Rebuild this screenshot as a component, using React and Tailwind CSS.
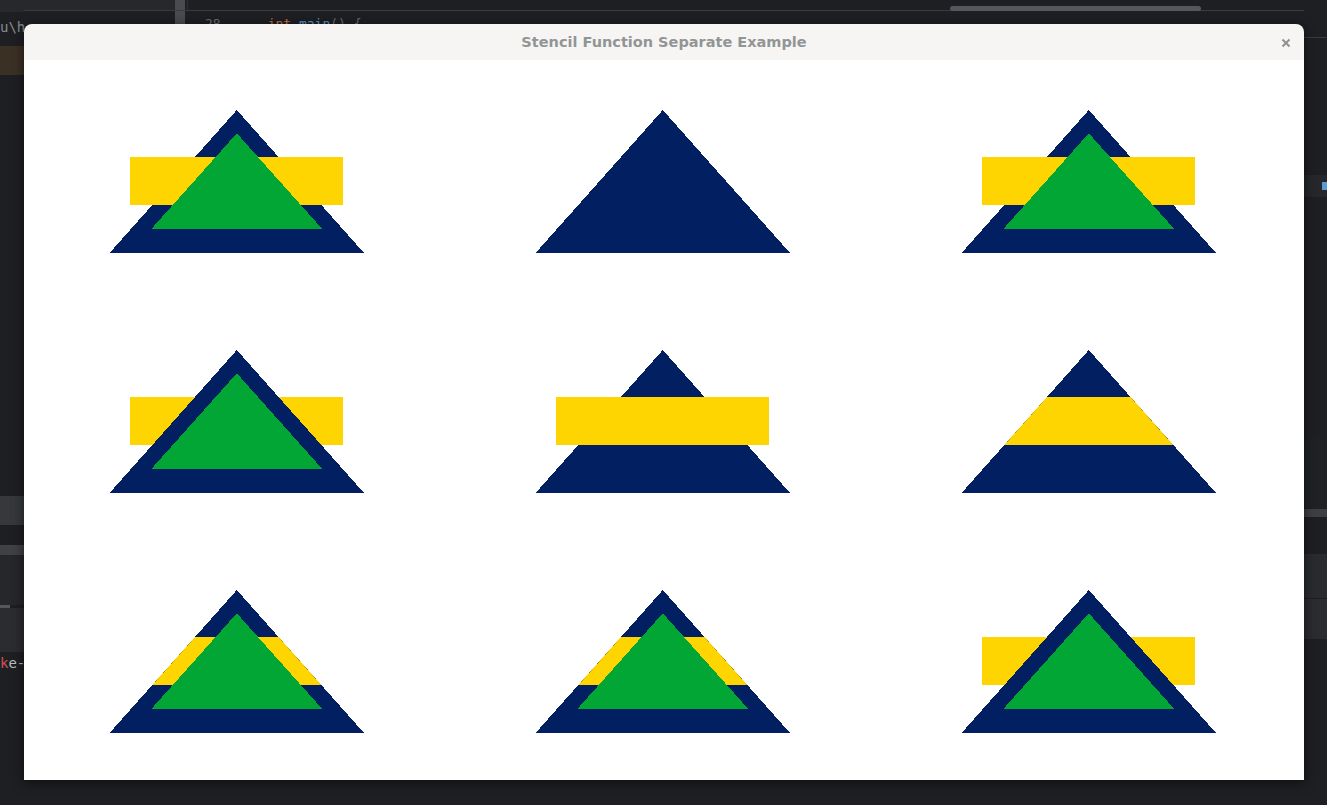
import { useId } from 'react';

const NAVY = '#022061';
const YELLOW = '#fed500';
const GREEN = '#01a634';

// shapes in px of one 426 x 240 cell
const OUTER = '212.8,50 340,193 85.6,193';
const INNER = '212.8,73.3 298,168.7 127.6,168.7';
const RECT = { x: 105.8, y: 96.7, width: 212.8, height: 48 };

// which layers show in each cell, in draw order
const cells = [
  ['navy', 'rect', 'green'],
  ['navy'],
  ['navy', 'rect', 'green'],
  ['rect', 'navy', 'green'],
  ['navy', 'rect'],
  ['navy', 'clip'],
  ['navy', 'clip', 'green'],
  ['navy', 'clip', 'green'],
  ['rect', 'navy', 'green'],
];

const mono = { fontFamily: '"DejaVu Sans Mono", monospace' };

const Cell = ({ layers }) => {
  const id = useId().replace(/:/g, '');
  return (
    <svg viewBox="0 0 426 240" width="426" height="240" className="block" shapeRendering="crispEdges">
      <defs>
        <clipPath id={`c${id}`}>
          <polygon points={OUTER} />
        </clipPath>
      </defs>
      {layers.map((l, i) => {
        if (l === 'navy') return <polygon key={i} points={OUTER} fill={NAVY} />;
        if (l === 'green') return <polygon key={i} points={INNER} fill={GREEN} />;
        if (l === 'rect') return <rect key={i} {...RECT} fill={YELLOW} />;
        return <rect key={i} {...RECT} fill={YELLOW} clipPath={`url(#c${id})`} />;
      })}
    </svg>
  );
};

// the editor behind the window
const Backdrop = () => (
  <div className="absolute inset-0 bg-[#1e1f23] flex overflow-hidden">
    <div className="w-[24px] flex flex-col shrink-0">
      <div className="h-[12px] bg-[#27282c]" />
      <div className="h-[34px] text-[14px] leading-[30px] text-[#8a8c90] whitespace-nowrap" style={mono}>u\h</div>
      <div className="h-[29px] bg-[#3b3024]" />
      <div className="h-[421px]" />
      <div className="h-[29px] bg-[#37383c]" />
      <div className="h-[20px]" />
      <div className="h-[10px] bg-[#404145]" />
      <div className="h-[50px] bg-[#26272b]" />
      <div className="h-[3px] w-[10px] bg-[#55575b]" />
      <div className="h-[44px] bg-[#2b2c30]" />
      <div className="pt-[4px] text-[14px] leading-none text-[#b8babd] whitespace-nowrap" style={mono}>
        <span className="text-[#d05050]">k</span>e-
      </div>
    </div>
    <div className="flex-1 flex flex-col">
      <div className="h-[11px] border-b border-[#3a3b3f] flex">
        <div className="w-[151px] bg-[#27282c]" />
        <div className="w-[10px] bg-[#4a4b50]" />
        <div className="w-px ml-[2px] bg-[#2f3034]" />
        <div className="ml-[762px] mt-[6px] w-[251px] h-[5px] rounded-full bg-[#55575c]" />
      </div>
      <div className="flex">
        <div className="w-[151px]" />
        <div className="w-[10px] h-[14px] bg-[#4a4b50]" />
        <div className="pl-[20px] text-[13px] leading-[26px] text-[#6b6d72] whitespace-nowrap" style={mono}>
          28&nbsp;&nbsp;&nbsp;&nbsp;&nbsp;&nbsp;<span className="text-[#c8744a]">int</span> <span className="text-[#5a9bd6]">main</span>() {'{'}
        </div>
      </div>
    </div>
    <div className="w-[23px] flex flex-col shrink-0">
      <div className="h-[38px] border-b border-[#3a3b3f]" />
      <div className="h-[137px]" />
      <div className="h-[22px] bg-[#26272b] flex justify-end items-center">
        <div className="w-[5px] h-[8px] bg-[#5a9bd6]" />
      </div>
      <div className="h-[242px]" />
      <div className="h-[70px] bg-[#202125]" />
      <div className="h-[8px] bg-[#3e3f43]" />
      <div className="h-[37px]" />
      <div className="h-[44px] bg-[#2a2b2f]" />
      <div className="h-[40px] mt-px bg-[#2b2c30]" />
    </div>
  </div>
);

export default function App() {
  return (
    <div className="relative w-[1327px] h-[805px] overflow-hidden">
      <Backdrop />
      {/* the example window */}
      <div className="absolute left-[24px] top-[24px] w-[1280px] flex flex-col rounded-t-[8px] overflow-hidden shadow-[0_2px_12px_rgba(0,0,0,0.6)]">
        <div className="h-[36px] bg-[#f6f5f4] flex items-center pt-[2px] pl-[25px] pr-[11px]">
          <span className="flex-1 text-center text-[14.5px] font-bold text-[#929595]" style={{ fontFamily: '"DejaVu Sans", sans-serif' }}>
            Stencil Function Separate Example
          </span>
          <span className="w-[14px] h-[16px] flex items-center justify-center">
            <svg width="10" height="10" viewBox="0 0 10 10">
              <path d="M1.5 1.5 L8.5 8.5 M8.5 1.5 L1.5 8.5" stroke="#8e9191" strokeWidth="2" />
            </svg>
          </span>
        </div>
        <div className="h-[720px] bg-white grid grid-cols-[426px_426px_428px] grid-rows-3">
          {cells.map((layers, i) => (
            <Cell key={i} layers={layers} />
          ))}
        </div>
      </div>
    </div>
  );
}
